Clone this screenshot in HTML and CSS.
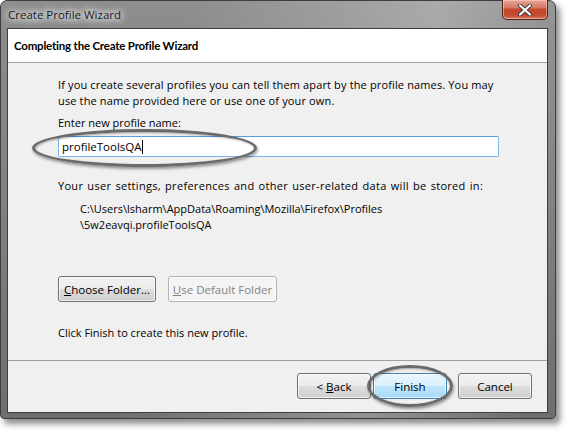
FILE: index.html
```html
<!DOCTYPE html>
<html>
<head>
<meta charset="utf-8">
<link rel="stylesheet" href="styles.css">
</head>
<body>
<div class="window">
  <div class="titlebar">
    <span class="title">Create Profile Wizard</span>
    <div class="close">
      <svg width="16" height="12" viewBox="0 0 16 12"><path d="M3 1.5 L13 10.5 M13 1.5 L3 10.5" stroke="#3a3a3a" stroke-width="4" stroke-linecap="round"/><path d="M3 1.5 L13 10.5 M13 1.5 L3 10.5" stroke="#ffffff" stroke-width="2.2" stroke-linecap="round"/></svg>
    </div>
  </div>
  <div class="client">
    <div class="header">Completing the Create Profile Wizard</div>
    <div class="content">
      <p class="intro">If you create several profiles you can tell them apart by the profile names. You may use the name provided here or use one of your own.</p>
      <div class="label">Enter new profile name:</div>
      <div class="inputwrap">
        <div class="input">profileToolsQA<span class="caret"></span></div>
        <div class="ring ring-input"></div>
      </div>
      <div class="stored">Your user settings, preferences and other user-related data will be stored in:</div>
      <div class="path">C:\Users\lsharm\AppData\Roaming\Mozilla\Firefox\Profiles<br>\5w2eavqi.profileToolsQA</div>
      <div class="folderbtns">
        <button class="btn choose"><u>C</u>hoose Folder...</button>
        <button class="btn disabled"><u>U</u>se Default Folder</button>
      </div>
      <div class="finishtext">Click Finish to create this new profile.</div>
    </div>
    <div class="footer">
      <button class="btn nav">&lt; <u>B</u>ack</button>
      <div class="finishwrap">
        <button class="btn nav default">Finish</button>
        <div class="ring ring-finish"></div>
      </div>
      <button class="btn nav cancel">Cancel</button>
    </div>
  </div>
</div>
</body>
</html>
```
FILE: styles.css
```css
* { box-sizing: border-box; }
html, body { margin: 0; padding: 0; background: #ffffff; }
body {
  width: 571px;
  height: 437px;
  font-family: "Open Sans", "Noto Sans", sans-serif;
  font-size: 11px;
  color: #000;
}
.window {
  width: 556px;
  height: 419px;
  display: flex;
  flex-direction: column;
  padding: 0 7px 5px 6px;
  border: 1px solid #3e3e3e;
  border-radius: 7px 7px 4px 4px;
  background:
    linear-gradient(100deg, rgba(255,255,255,0) 30%, rgba(255,255,255,0.25) 70%, rgba(255,255,255,0) 95%),
    linear-gradient(180deg, #8e8e8e 0%, #8a8a8a 10%, #7d7d7d 60%, #6e6e6e 100%);
  box-shadow: 4px 5px 6px rgba(0,0,0,0.45);
}
.titlebar {
  height: 27px;
  display: flex;
  align-items: flex-start;
}
.title {
  margin-top: 6px;
  margin-left: 1px;
  font-size: 11.5px;
  color: #1a1a1a;
  text-shadow: 0 0 6px #fff, 0 0 8px #fff, 0 0 10px rgba(255,255,255,0.9);
}
.close {
  margin-left: auto;
  margin-top: -1px;
  width: 46px;
  height: 20px;
  border: 1px solid #4d2418;
  border-top: none;
  border-radius: 0 0 5px 5px;
  background: linear-gradient(180deg, #e9a595 0%, #d47a66 40%, #c5462c 50%, #c24a30 80%, #d67e63 100%);
  box-shadow: inset 0 0 0 1px rgba(255,220,210,0.5);
  display: flex;
  align-items: center;
  justify-content: center;
}
.client {
  flex: 1;
  display: flex;
  flex-direction: column;
  border: 1px solid #3f3f3f;
  background: #f0f0f0;
}
.header {
  height: 34px;
  background: #fff;
  border-bottom: 1px solid #a0a0a0;
  padding-left: 6px;
  display: flex;
  align-items: center;
  font-family: "Lato", "Open Sans", sans-serif;
  font-weight: bold;
  font-size: 11.5px;
  letter-spacing: -0.2px;
}
.content {
  padding: 14px 48px 0 50px;
  height: 298px;
  border-bottom: 1px solid #a0a0a0;
}
.intro {
  margin: 0;
  line-height: 16px;
  letter-spacing: 0.14px;
}
.label {
  margin-top: 6px;
  line-height: 16px;
}
.inputwrap {
  position: relative;
  margin-top: 5px;
}
.input {
  height: 21px;
  background: #fff;
  border: 1px solid #7eb4ea;
  border-top-color: #569de5;
  border-radius: 2px;
  padding-left: 3px;
  display: flex;
  align-items: center;
  font-size: 11.5px;
  line-height: 14px;
}
.caret {
  display: inline-block;
  width: 1px;
  height: 14px;
  background: #000;
}
.ring {
  position: absolute;
  border: 3.5px solid #6a6a6a;
  border-radius: 50%;
  box-shadow: 1px 2px 3px rgba(0,0,0,0.4), inset 1px 1px 2px rgba(0,0,0,0.3);
  pointer-events: none;
}
.ring-input {
  left: -26px;
  top: -7px;
  width: 225px;
  height: 38px;
}
.stored {
  margin-top: 21px;
  line-height: 16px;
  letter-spacing: 0.3px;
  word-spacing: 1px;
}
.path {
  margin-top: 7px;
  padding-left: 22px;
  line-height: 16px;
}
.folderbtns {
  margin-top: 43px;
  display: flex;
  gap: 12px;
}
.btn {
  font-family: inherit;
  font-size: 11.5px;
  height: 26px;
  padding: 0 5px;
  border: 1px solid #707070;
  border-radius: 3px;
  color: #000;
  background: linear-gradient(180deg, #f2f2f2 0%, #ebebeb 50%, #dddddd 51%, #cfcfcf 100%);
  box-shadow: inset 0 0 0 1px rgba(255,255,255,0.7);
}
.btn.choose { width: 98px; padding: 0; }
.btn.disabled {
  width: 109px;
  padding: 0;
  border-color: #adb2b5;
  background: #f4f4f4;
  color: #838383;
}
.finishtext {
  margin-top: 23px;
  line-height: 16px;
}
.footer {
  flex: 1;
  display: flex;
  align-items: flex-start;
  padding-top: 12px;
  padding-right: 15px;
  justify-content: flex-end;
}
.nav {
  width: 74px;
}
.finishwrap {
  position: relative;
  margin-left: 2px;
}
.btn.default {
  border-color: #3c7fb1;
  background: linear-gradient(180deg, #eaf6fd 0%, #d9f0fc 50%, #bee6fd 51%, #a7d9f5 100%);
}
.ring-finish {
  left: -6px;
  top: -8px;
  width: 86px;
  height: 42px;
}
.cancel {
  margin-left: 11px;
}
```
